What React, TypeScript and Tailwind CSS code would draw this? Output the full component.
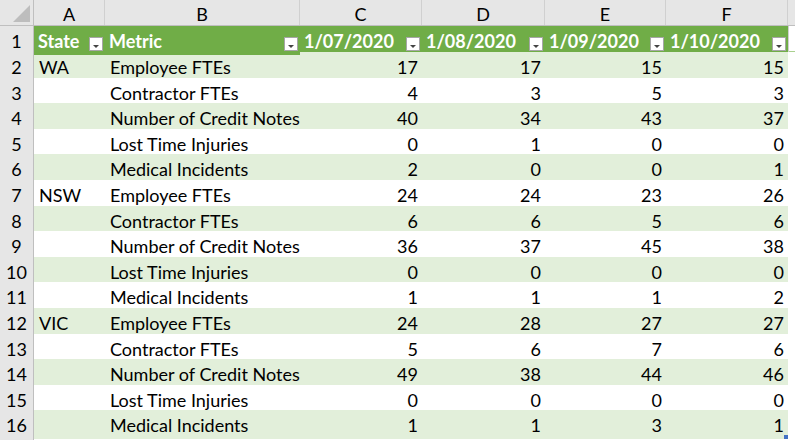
import React from "react";

const cols = ["A", "B", "C", "D", "E", "F"];
const rows: [string, string, number, number, number, number][] = [
  ["WA", "Employee FTEs", 17, 17, 15, 15],
  ["", "Contractor FTEs", 4, 3, 5, 3],
  ["", "Number of Credit Notes", 40, 34, 43, 37],
  ["", "Lost Time Injuries", 0, 1, 0, 0],
  ["", "Medical Incidents", 2, 0, 0, 1],
  ["NSW", "Employee FTEs", 24, 24, 23, 26],
  ["", "Contractor FTEs", 6, 6, 5, 6],
  ["", "Number of Credit Notes", 36, 37, 45, 38],
  ["", "Lost Time Injuries", 0, 0, 0, 0],
  ["", "Medical Incidents", 1, 1, 1, 2],
  ["VIC", "Employee FTEs", 24, 28, 27, 27],
  ["", "Contractor FTEs", 5, 6, 7, 6],
  ["", "Number of Credit Notes", 49, 38, 44, 46],
  ["", "Lost Time Injuries", 0, 0, 0, 0],
  ["", "Medical Incidents", 1, 1, 3, 1],
];

const grid = "grid grid-cols-[34px_71px_195px_122px_123px_121px_122px_1fr]";

function Filter() {
  return (
    <div className="absolute right-[2px] bottom-[4px] w-[14px] h-[14px] bg-white border border-[#a6a6a6] flex items-end justify-center pb-[2px]">
      <div className="w-0 h-0 border-l-[3px] border-r-[3px] border-t-[3px] border-l-transparent border-r-transparent border-t-[#444]" />
    </div>
  );
}

export default function App() {
  const font = { fontFamily: "Lato, 'Liberation Sans', sans-serif" };
  return (
    <div className="w-[795px] h-[440px] overflow-hidden bg-white text-[18px] text-black" style={font}>
      {/* column headers */}
      <div className={`${grid} h-[26px] bg-[#e6e6e6] border-b border-[#bfbfbf]`}>
        <div className="relative border-r border-[#bfbfbf]">
          <div className="absolute right-[3px] bottom-[3px] w-0 h-0 border-l-[17px] border-t-[17px] border-l-transparent border-t-transparent border-r-0 border-b-0" style={{ borderRightWidth: 0 }} />
          <div className="absolute right-[3px] bottom-[3px] w-0 h-0 border-b-[17px] border-l-[17px] border-l-transparent border-b-[#bdbdbd]" />
        </div>
        {cols.map((c) => (
          <div key={c} className="flex items-center justify-center border-r border-[#d0d0d0] leading-none pt-[2px]">
            {c}
          </div>
        ))}
        <div />
      </div>
      {/* header row 1 */}
      <div className={`${grid} h-[26px] border-b border-[#a9d08e]`}>
        <div className="flex items-center justify-center bg-[#e6e6e6] border-r border-[#bfbfbf] pt-[2px]">1</div>
        {["State", "Metric", "1/07/2020", "1/08/2020", "1/09/2020", "1/10/2020"].map((h) => (
          <div key={h} className="relative flex items-center bg-[#70ad47] text-white font-bold pl-[4px] pt-[2px]">
            {h}
            <Filter />
          </div>
        ))}
        <div className="border-l border-[#d0d0d0]" />
      </div>
      {rows.map((r, i) => {
        const band = i % 2 === 0 ? "bg-[#e2efda]" : "bg-white";
        return (
          <div key={i} className={`${grid} h-[25.6px] border-b border-[#a9d08e]`}>
            <div className="flex items-center justify-center bg-[#e6e6e6] border-r border-[#bfbfbf] pt-[2px]">{i + 2}</div>
            <div className={`${band} flex items-center pl-[5px] pt-[2px]`}>{r[0]}</div>
            <div className={`${band} flex items-center pl-[5px] pt-[2px]`}>{r[1]}</div>
            {[r[2], r[3], r[4], r[5]].map((v, j) => (
              <div key={j} className={`${band} relative flex items-center justify-end pr-[4px] pt-[2px]`}>
                {v}
                {i === rows.length - 1 && j === 3 && (
                  <div className="absolute right-0 bottom-0 w-[4px] h-[4px] bg-[#4472c4]" />
                )}
              </div>
            ))}
            <div className="bg-white" />
          </div>
        );
      })}
      <div className={`${grid} h-[20px]`}>
        <div className="bg-[#e6e6e6] border-r border-[#bfbfbf]" />
      </div>
    </div>
  );
}
